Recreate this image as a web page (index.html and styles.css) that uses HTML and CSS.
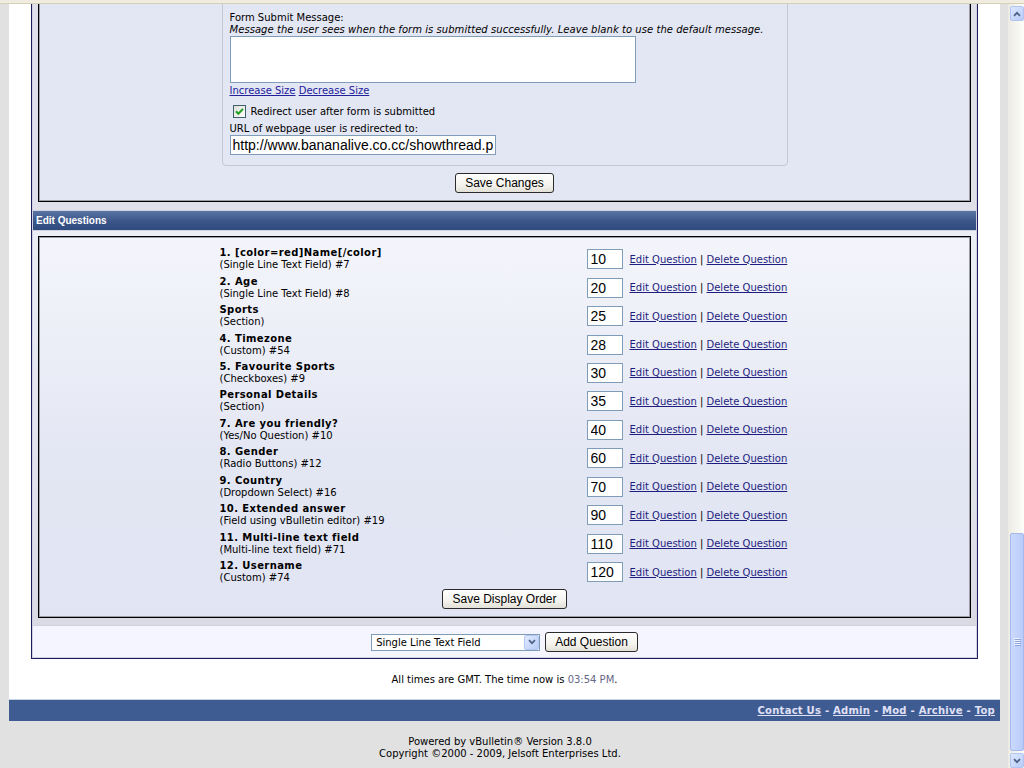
FILE: index.html
```html
<!DOCTYPE html>
<html lang="en">
<head>
    <meta charset="UTF-8">
    <title>Edit Form - Questions</title>
    <link rel="stylesheet" href="styles.css">
</head>
<body>
    <div class="chrome-top"></div>
    <div class="window">
        <div class="viewport">
            <div class="page">
                <div class="tborder">
                    <div class="panelsurround">
                        <div class="panel">
                            <fieldset class="fieldset">
                                <div class="smallfont">Form Submit Message:</div>
                                <div class="smallfont desc">Message the user sees when the form is submitted successfully. Leave blank to use the default message.</div>
                                <textarea class="bginput msg" rows="3" cols="60"></textarea>
                                <div class="smallfont resize-links"><a href="#">Increase Size</a> <a href="#">Decrease Size</a></div>
                                <label class="smallfont check-row">
                                    <span class="checkbox">
                                        <svg width="13" height="13" viewBox="0 0 13 13">
                                            <defs>
                                                <linearGradient id="cbg" x1="0" y1="0" x2="1" y2="1">
                                                    <stop offset="0" stop-color="#dcdcd7"/>
                                                    <stop offset="1" stop-color="#ffffff"/>
                                                </linearGradient>
                                            </defs>
                                            <rect x="0.5" y="0.5" width="12" height="12" fill="url(#cbg)" stroke="#3f5f6f"/>
                                            <path d="M3 6.3 L5.4 8.8 L10 3.9" fill="none" stroke="#21a121" stroke-width="2"/>
                                        </svg>
                                    </span>
                                    Redirect user after form is submitted
                                </label>
                                <div class="smallfont url-label">URL of webpage user is redirected to:</div>
                                <input type="text" class="bginput url" value="http://www.bananalive.co.cc/showthread.php">
                            </fieldset>
                            <div class="submit-row">
                                <button type="button" class="button">Save Changes</button>
                            </div>
                        </div>
                    </div>

                    <div class="thead">Edit Questions</div>

                    <div class="panelsurround lower">
                        <div class="panel panel-grad">
                            <div class="question-list">
                                <div class="q-row">
                                    <div class="q-info"><div class="q-title">1. [color=red]Name[/color]</div><div>(Single Line Text Field) #7</div></div>
                                    <input type="text" class="bginput order" value="10">
                                    <div class="q-links"><a href="#">Edit Question</a> | <a href="#">Delete Question</a></div>
                                </div>
                                <div class="q-row">
                                    <div class="q-info"><div class="q-title">2. Age</div><div>(Single Line Text Field) #8</div></div>
                                    <input type="text" class="bginput order" value="20">
                                    <div class="q-links"><a href="#">Edit Question</a> | <a href="#">Delete Question</a></div>
                                </div>
                                <div class="q-row">
                                    <div class="q-info"><div class="q-title">Sports</div><div>(Section)</div></div>
                                    <input type="text" class="bginput order" value="25">
                                    <div class="q-links"><a href="#">Edit Question</a> | <a href="#">Delete Question</a></div>
                                </div>
                                <div class="q-row">
                                    <div class="q-info"><div class="q-title">4. Timezone</div><div>(Custom) #54</div></div>
                                    <input type="text" class="bginput order" value="28">
                                    <div class="q-links"><a href="#">Edit Question</a> | <a href="#">Delete Question</a></div>
                                </div>
                                <div class="q-row">
                                    <div class="q-info"><div class="q-title">5. Favourite Sports</div><div>(Checkboxes) #9</div></div>
                                    <input type="text" class="bginput order" value="30">
                                    <div class="q-links"><a href="#">Edit Question</a> | <a href="#">Delete Question</a></div>
                                </div>
                                <div class="q-row">
                                    <div class="q-info"><div class="q-title">Personal Details</div><div>(Section)</div></div>
                                    <input type="text" class="bginput order" value="35">
                                    <div class="q-links"><a href="#">Edit Question</a> | <a href="#">Delete Question</a></div>
                                </div>
                                <div class="q-row">
                                    <div class="q-info"><div class="q-title">7. Are you friendly?</div><div>(Yes/No Question) #10</div></div>
                                    <input type="text" class="bginput order" value="40">
                                    <div class="q-links"><a href="#">Edit Question</a> | <a href="#">Delete Question</a></div>
                                </div>
                                <div class="q-row">
                                    <div class="q-info"><div class="q-title">8. Gender</div><div>(Radio Buttons) #12</div></div>
                                    <input type="text" class="bginput order" value="60">
                                    <div class="q-links"><a href="#">Edit Question</a> | <a href="#">Delete Question</a></div>
                                </div>
                                <div class="q-row">
                                    <div class="q-info"><div class="q-title">9. Country</div><div>(Dropdown Select) #16</div></div>
                                    <input type="text" class="bginput order" value="70">
                                    <div class="q-links"><a href="#">Edit Question</a> | <a href="#">Delete Question</a></div>
                                </div>
                                <div class="q-row">
                                    <div class="q-info"><div class="q-title">10. Extended answer</div><div>(Field using vBulletin editor) #19</div></div>
                                    <input type="text" class="bginput order" value="90">
                                    <div class="q-links"><a href="#">Edit Question</a> | <a href="#">Delete Question</a></div>
                                </div>
                                <div class="q-row">
                                    <div class="q-info"><div class="q-title">11. Multi-line text field</div><div>(Multi-line text field) #71</div></div>
                                    <input type="text" class="bginput order" value="110">
                                    <div class="q-links"><a href="#">Edit Question</a> | <a href="#">Delete Question</a></div>
                                </div>
                                <div class="q-row">
                                    <div class="q-info"><div class="q-title">12. Username</div><div>(Custom) #74</div></div>
                                    <input type="text" class="bginput order" value="120">
                                    <div class="q-links"><a href="#">Edit Question</a> | <a href="#">Delete Question</a></div>
                                </div>
                            </div>
                            <div class="submit-row order-submit">
                                <button type="button" class="button">Save Display Order</button>
                            </div>
                        </div>
                    </div>

                    <div class="alt1 add-row">
                        <div class="select-wrap">
                            <select class="bginput type-select">
                                <option>Single Line Text Field</option>
                                <option>Multi-line text field</option>
                                <option>Checkboxes</option>
                                <option>Radio Buttons</option>
                                <option>Dropdown Select</option>
                            </select>
                            <span class="select-arrow">
                                <svg width="8" height="6" viewBox="0 0 8 6"><path d="M1 1.2 L4 4.2 L7 1.2" fill="none" stroke="#4d6185" stroke-width="1.7"/></svg>
                            </span>
                        </div>
                        <button type="button" class="button">Add Question</button>
                    </div>
                </div>

                <div class="smallfont time-note">All times are GMT. The time now is <span class="time">03:54 PM</span>.</div>
            </div>

            <div class="tfoot">
                <strong><a href="#">Contact Us</a> - <a href="#">Admin</a> - <a href="#">Mod</a> - <a href="#">Archive</a> - <a href="#">Top</a></strong>
            </div>

            <div class="smallfont copyright">
                Powered by vBulletin&reg; Version 3.8.0<br>
                Copyright &copy;2000 - 2009, Jelsoft Enterprises Ltd.
            </div>
        </div>

        <div class="scrollbar">
            <span class="sb-btn">
                <svg width="8" height="6" viewBox="0 0 8 6"><path d="M1 4.8 L4 1.8 L7 4.8" fill="none" stroke="#4d6185" stroke-width="1.7"/></svg>
            </span>
            <span class="sb-track"></span>
            <span class="sb-thumb">
                <svg width="7" height="8" viewBox="0 0 7 8">
                    <path d="M0 0.5 H6 M0 2.5 H6 M0 4.5 H6 M0 6.5 H6" stroke="#eef3ff" stroke-width="1"/>
                    <path d="M1 1.5 H7 M1 3.5 H7 M1 5.5 H7 M1 7.5 H7" stroke="#8ca4e0" stroke-width="1"/>
                </svg>
            </span>
            <span class="sb-btn">
                <svg width="8" height="6" viewBox="0 0 8 6"><path d="M1 1.2 L4 4.2 L7 1.2" fill="none" stroke="#4d6185" stroke-width="1.7"/></svg>
            </span>
        </div>
    </div>
</body>
</html>
```

FILE: styles.css
```css
body {
    margin: 0;
    width: 1024px;
    height: 768px;
    overflow: hidden;
    background: #e1e1e2;
    font-family: "DejaVu Sans", Verdana, sans-serif;
    font-size: 10px;
    color: #000;
}
a {
    color: #22229c;
}
.chrome-top {
    height: 3px;
    background: #f0ede0;
    border-bottom: 1px solid #d6d0ba;
}
.window {
    display: flex;
    height: 764px;
}
.viewport {
    flex: 1;
    overflow: hidden;
}
/* the page is scrolled down, so the top of the form sits above the window */
.page {
    margin: -28px 8px 0 9px;
    padding: 0 22px;
    background: #fff;
}
.smallfont {
    font-size: 10px;
    line-height: 12px;
}
.tborder {
    border: 1px solid #1c1f5c;
    background: #d1d1e1;
    padding: 1px;
    display: flex;
    flex-direction: column;
    gap: 1px;
}
.panelsurround {
    background: #dfe0ea;
    padding: 5px 5px 8px;
}
.panelsurround.lower {
    background: linear-gradient(#eceef6, #d9dae4);
    padding-bottom: 7px;
}
.panel {
    background: #e3e6f3;
    border: 1px solid #000;
    box-shadow: inset 0 0 0 1px #9c9ca8;
    padding: 11px 11px 8px;
}
.panel-grad {
    background: linear-gradient(#f4f5fb, #e3e6f3 60%, #e1e4f2);
    padding-top: 8px;
}
.fieldset {
    width: 566px;
    box-sizing: border-box;
    margin: 0 auto;
    padding: 15px 7px 10px;
    border: 1px solid #c6c7d2;
    border-radius: 4px;
    min-width: 0;
}
.fieldset .smallfont {
    position: relative;
    top: 1px;
}
.desc {
    font-style: italic;
    letter-spacing: 0.05px;
}
.bginput {
    box-sizing: border-box;
    border: 1px solid #7f9db9;
    background: #fff;
    color: #000;
}
.msg {
    display: block;
    width: 406px;
    height: 47px;
    margin-top: 1px;
    resize: none;
}
.resize-links {
    margin-top: 1px;
}
.check-row {
    display: flex;
    align-items: center;
    height: 13px;
    margin-top: 8px;
}
.checkbox {
    display: flex;
    margin: 0 5px 0 3px;
}
.url-label {
    margin-top: 5px;
}
.url {
    display: block;
    width: 266px;
    height: 20px;
    margin-top: 1px;
    padding: 0 2px;
    font-family: "Liberation Sans", Arial, sans-serif;
    font-size: 14px;
}
.submit-row {
    display: flex;
    justify-content: center;
    margin-top: 7px;
}
.order-submit {
    margin-top: 3px;
}
.button {
    height: 20px;
    padding: 0 9px;
    border: 1px solid #2b2b2b;
    border-radius: 3px;
    background: linear-gradient(#ffffff, #f4f3ee 60%, #e2e0d6);
    font-family: "Liberation Sans", Arial, sans-serif;
    font-size: 12px;
    color: #000;
}
.thead {
    height: 19px;
    line-height: 19px;
    padding: 0 3px;
    background: linear-gradient(#5a74a4, #3a5587 55%, #2f4a7e);
    color: #fff;
    font-family: "Liberation Sans", Arial, sans-serif;
    font-size: 10px;
    font-weight: bold;
}
.question-list {
    width: 570px;
    margin: 0 auto;
}
.q-row {
    display: flex;
    align-items: center;
    height: 28.45px;
}
.q-info {
    width: 367px;
    line-height: 12px;
}
.q-title {
    font-weight: bold;
    letter-spacing: 0.4px;
}
.order {
    width: 36px;
    height: 20px;
    padding: 0 3px;
    font-family: "Liberation Sans", Arial, sans-serif;
    font-size: 14px;
}
.q-links {
    margin-left: 7px;
}
.q-links a {
    color: #1e1e80;
}
.alt1 {
    background: #f5f5ff;
}
.add-row {
    display: flex;
    justify-content: center;
    align-items: center;
    gap: 5px;
    padding: 6px 0 5px;
}
.select-wrap {
    position: relative;
    display: flex;
}
.type-select {
    appearance: none;
    width: 169px;
    height: 17px;
    padding: 0 4px;
    font-family: "DejaVu Sans", Verdana, sans-serif;
    font-size: 10px;
}
.select-arrow {
    position: absolute;
    top: 1px;
    right: 1px;
    bottom: 1px;
    width: 15px;
    box-sizing: border-box;
    display: flex;
    align-items: center;
    justify-content: center;
    background: linear-gradient(135deg, #e0e9fe, #b9cdf8);
    border: 1px solid #b4c7f3;
    border-radius: 2px;
    pointer-events: none;
}
.time-note {
    text-align: center;
    padding: 15px 0 13px;
}
.time {
    color: #666686;
}
.tfoot {
    margin: 0 8px 0 9px;
    border-top: 1px solid #c5d3e3;
    background: #3e5c92;
    color: #e0e0f6;
    text-align: right;
    padding: 4px 5px 4px;
    line-height: 13px;
    letter-spacing: 0.25px;
}
.tfoot a {
    color: #e0e0f6;
}
.copyright {
    text-align: center;
    padding-top: 15px;
    margin-right: 8px;
}
.scrollbar {
    width: 16px;
    box-sizing: border-box;
    padding: 2px 0 0 2px;
    display: flex;
    flex-direction: column;
    background: linear-gradient(to right, #ecebe3, #fdfdfa);
}
.sb-btn {
    height: 15px;
    box-sizing: border-box;
    display: flex;
    align-items: center;
    justify-content: center;
    background: linear-gradient(135deg, #dde7fe, #b8ccf8);
    border: 1px solid #b2c5f2;
    border-radius: 2px;
}
.sb-track {
    flex: 1;
}
.sb-thumb {
    height: 218px;
    margin-bottom: 2px;
    box-sizing: border-box;
    display: flex;
    align-items: center;
    justify-content: center;
    background: linear-gradient(to right, #cad9fd, #bacbf9);
    border: 1px solid #a6b9ee;
    border-radius: 2px;
}
```
